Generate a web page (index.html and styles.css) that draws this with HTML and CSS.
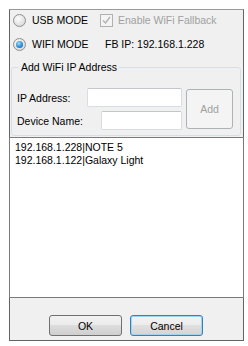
FILE: index.html
```
<!DOCTYPE html>
<html>
<head>
    <meta charset="UTF-8">
    <title>Connection</title>
    <link rel="stylesheet" href="styles.css">
</head>
<body>
<div class="window">
    <div class="mode_row first">
        <span class="mode"><span class="radio"></span>USB MODE</span>
        <span class="check"><svg width="9" height="9" viewBox="0 0 9 9"><path d="M1 4.5 L3.5 7 L8 1" fill="none" stroke="#b3b3b3" stroke-width="1.4"/></svg></span>
        <span class="disabled_text">Enable WiFi Fallback</span>
    </div>
    <div class="mode_row second">
        <span class="mode"><span class="radio checked"></span>WIFI MODE</span>
        <span class="fb_ip">FB IP: 192.168.1.228</span>
    </div>

    <fieldset class="group">
        <legend>Add WiFi IP Address</legend>
        <div class="group_body">
            <div class="fields">
                <div class="field_row">
                    <label for="ip">IP Address:</label>
                    <input type="text" id="ip" class="ip_input">
                </div>
                <div class="field_row">
                    <label for="device">Device Name:</label>
                    <input type="text" id="device" class="device_input">
                </div>
            </div>
            <button class="btn_add" disabled>Add</button>
        </div>
    </fieldset>

    <div class="listbox">
        <div class="item">192.168.1.228|NOTE 5</div>
        <div class="item">192.168.1.122|Galaxy Light</div>
    </div>

    <div class="bottom">
        <button class="btn">OK</button>
        <button class="btn focused">Cancel</button>
    </div>
</div>
</body>
</html>
```

FILE: styles.css
```
* {
    margin: 0px;
    padding: 0px;
    box-sizing: border-box;
}

body {
    background-color: white;
    font-family: "Liberation Sans", Arial, sans-serif;
    font-size: 10.5px;
    color: #000;
}

.window {
    width: 235px;
    height: 332px;
    margin: 9px 0 0 9px;
    background-color: #f0f0f0;
    border: 1px solid #646464;
    border-top-color: #9a9a9a;
    display: flex;
    flex-direction: column;
}

.mode_row {
    display: flex;
    align-items: center;
    height: 13px;
    padding-left: 3px;
    line-height: 13px;
}

.mode_row.first {
    margin-top: 4px;
}

.mode_row.second {
    margin-top: 11px;
}

.mode {
    display: flex;
    align-items: center;
    width: 87px;
}

/* radio buttons */
.radio {
    width: 13px;
    height: 13px;
    border-radius: 50%;
    border: 1px solid #8e8f8f;
    background: radial-gradient(circle at 40% 35%, #fdfdfd 0%, #e2e2e2 60%, #cfcfcf 100%);
    margin-right: 6px;
    position: relative;
}

.radio.checked::after {
    content: "";
    position: absolute;
    left: 2px;
    top: 2px;
    width: 7px;
    height: 7px;
    border-radius: 50%;
    background: radial-gradient(circle at 40% 35%, #9fdcff 0%, #2f8fd4 55%, #0b4f8c 100%);
}

.check {
    width: 13px;
    height: 13px;
    border: 1px solid #b1b1b1;
    background-color: #f4f4f4;
    display: flex;
    align-items: center;
    justify-content: center;
    margin-right: 5px;
}

.disabled_text {
    color: #a0a0a0;
}

.fb_ip {
    margin-left: 5px;
}

/* group box */
.group {
    margin: 10px 2px 0 1px;
    border: 1px solid #d5dfe5;
    border-radius: 3px;
    padding: 0 6px 5px 5px;
}

.group legend {
    margin-left: 2px;
    padding: 0 2px;
    line-height: 13px;
    height: 13px;
}

.group_body {
    display: flex;
    align-items: center;
    padding-top: 14px;
}

.fields {
    width: 165px;
    display: flex;
    flex-direction: column;
    gap: 4px;
}

.field_row {
    display: flex;
    align-items: center;
    justify-content: space-between;
    height: 19px;
}

.field_row input {
    height: 19px;
    border: 1px solid #d9dce2;
    border-top-color: #c3c6cc;
    border-radius: 2px;
    background-color: white;
    outline: none;
}

.ip_input {
    width: 95px;
}

.device_input {
    width: 81px;
}

.btn_add {
    width: 47px;
    height: 40px;
    margin-left: 4px;
    border: 1px solid #adb2b5;
    border-radius: 3px;
    background-color: #f4f4f4;
    color: #a0a0a0;
    font-family: "Liberation Sans", Arial, sans-serif;
    font-size: 10.5px;
}

/* list */
.listbox {
    height: 161px;
    margin: 1px -1px 0 -1px;
    background-color: white;
    border: 1px solid #7a7a7a;
    padding: 3px 0 0 5px;
}

.item {
    line-height: 13px;
    height: 13px;
    white-space: nowrap;
}

.bottom {
    display: flex;
    gap: 8px;
    padding: 17px 0 0 39px;
}

.btn {
    width: 73px;
    height: 21px;
    border: 1px solid #707070;
    border-radius: 3px;
    background: linear-gradient(#f2f2f2 0%, #ebebeb 49%, #dddddd 50%, #cfcfcf 100%);
    font-family: "Liberation Sans", Arial, sans-serif;
    font-size: 10.5px;
    color: #000;
}

.btn.focused {
    border-color: #3c7fb1;
    background: linear-gradient(#f3f3f3 0%, #ececec 49%, #e0e0e0 50%, #d4d4d4 100%);
    box-shadow: inset 0 0 0 1px #9fd5f2;
}
```
